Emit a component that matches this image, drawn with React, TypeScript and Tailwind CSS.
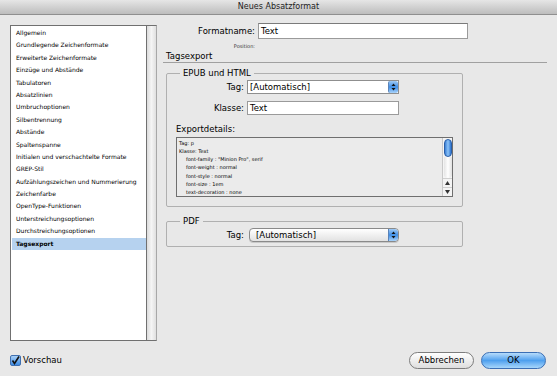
import React from "react";

const items = [
  "Allgemein",
  "Grundlegende Zeichenformate",
  "Erweiterte Zeichenformate",
  "Einzüge und Abstände",
  "Tabulatoren",
  "Absatzlinien",
  "Umbruchoptionen",
  "Silbentrennung",
  "Abstände",
  "Spaltenspanne",
  "Initialen und verschachtelte Formate",
  "GREP-Stil",
  "Aufzählungszeichen und Nummerierung",
  "Zeichenfarbe",
  "OpenType-Funktionen",
  "Unterstreichungsoptionen",
  "Durchstreichungsoptionen",
  "Tagsexport",
];

const details = [
  { text: "Tag: p", indent: false },
  { text: "Klasse: Text", indent: false },
  { text: 'font-family : "Minion Pro", serif', indent: true },
  { text: "font-weight : normal", indent: true },
  { text: "font-style : normal", indent: true },
  { text: "font-size : 1em", indent: true },
  { text: "text-decoration : none", indent: true },
];

const Arrows = () => (
  <svg width="5" height="8" viewBox="0 0 5 8">
    <path d="M2.5 0.5 L4.5 3 L0.5 3 Z" fill="#111" />
    <path d="M2.5 7.5 L4.5 5 L0.5 5 Z" fill="#111" />
  </svg>
);

const Stepper = ({ round }: { round: string }) => (
  <div
    className={`w-[10px] h-full flex items-center justify-center bg-gradient-to-b from-[#9fcaf5] via-[#3d8ee6] to-[#a9d3fa] border-l border-[#5a83b8] ${round}`}
  >
    <Arrows />
  </div>
);

export default function App() {
  return (
    <div
      className="w-[557px] h-[376px] bg-[#e8e8e8] flex flex-col text-black overflow-hidden"
      style={{ fontFamily: '"DejaVu Sans", sans-serif' }}
    >
      {/* title bar */}
      <div className="h-[15px] shrink-0 flex items-center justify-center bg-gradient-to-b from-[#e6e6e6] to-[#bdbdbd] border-b border-[#8f8f8f] text-[8px] text-[#222]">
        Neues Absatzformat
      </div>

      <div className="flex pl-[10px] pt-[8px]">
        {/* category list */}
        <div className="mt-[2px] w-[147px] h-[316px] flex border border-[#707070] border-r-[#a8a8a8]">
          <div className="flex-1 bg-white pt-[1px] pl-[1px] border-r border-[#707070]">
            {items.map((item) => (
              <div
                key={item}
                className={`h-[12.4px] leading-[12.4px] pl-[4px] text-[6px] whitespace-nowrap ${
                  item === "Tagsexport" ? "bg-[#b6d2ef] font-bold" : ""
                }`}
              >
                {item}
              </div>
            ))}
          </div>
          <div className="w-[9px] bg-gradient-to-r from-[#dcdcdc] via-[#f5f5f5] to-[#e0e0e0]" />
        </div>

        {/* right panel */}
        <div className="ml-[6px] w-[384px]">
          <div className="flex items-center h-[16px]">
            <div className="w-[95px] text-right text-[8.5px] pr-[3px]">Formatname:</div>
            <div className="w-[210px] h-[16px] bg-white border border-[#9a9a9a] border-t-[#7a7a7a] text-[8.5px] leading-[14px] pl-[2px]">
              Text
            </div>
          </div>
          <div className="w-[92px] text-right text-[5px] leading-[6px] mt-[4px] text-[#333]">Position:</div>
          <div className="mt-[2px] h-[12px] border-b border-[#a0a0a0] text-[8.5px] leading-[11px] pl-[3px]">
            Tagsexport
          </div>

          {/* EPUB */}
          <fieldset className="mt-[5px] ml-[3px] w-[297px] border border-[#b0b0b0] rounded-[2px] pl-[9px] pb-[9px]">
            <legend className="ml-[4px] px-[3px] text-[8.5px] leading-[11px]">EPUB und HTML</legend>
            <div className="flex items-center h-[14px] mt-[1px]">
              <div className="w-[71px] text-right text-[8.5px] pr-[3px]">Tag:</div>
              <div className="w-[152px] h-[14px] flex bg-white border border-[#8f8f8f]">
                <div className="flex-1 text-[8.5px] leading-[12px] pl-[2px]">[Automatisch]</div>
                <Stepper round="rounded-[2px]" />
              </div>
            </div>
            <div className="flex items-center h-[14px] mt-[7px]">
              <div className="w-[71px] text-right text-[8.5px] pr-[3px]">Klasse:</div>
              <div className="w-[152px] h-[14px] bg-white border border-[#9a9a9a] text-[8.5px] leading-[12px] pl-[2px]">
                Text
              </div>
            </div>
            <div className="mt-[9px] text-[8.5px] leading-[10px]">Exportdetails:</div>
            <div className="mt-[3px] w-[277px] h-[60px] flex border border-[#6f6f6f] bg-[#ebebeb] overflow-hidden">
              <div className="flex-1 pt-[0.5px] pl-[2px] overflow-hidden">
                {details.map((d) => (
                  <div
                    key={d.text}
                    className={`text-[5px] leading-[8.3px] whitespace-nowrap ${d.indent ? "pl-[7px]" : ""}`}
                  >
                    {d.text}
                  </div>
                ))}
              </div>
              <div className="w-[10px] flex flex-col bg-[#f4f4f4] border-l border-[#c8c8c8]">
                <div className="mx-auto mt-[1px] w-[8px] h-[18px] rounded-full bg-gradient-to-r from-[#3a7fd6] via-[#8cc3f7] to-[#2c74d0] border border-[#2a5fa8]" />
                <div className="flex-1 mx-auto w-[8px] rounded-b-full bg-gradient-to-r from-[#e4e4e4] via-[#ffffff] to-[#e0e0e0]" />
                <div className="h-[9px] flex items-center justify-center border-t border-[#cfcfcf]">
                  <svg width="5" height="4" viewBox="0 0 5 4">
                    <path d="M2.5 0 L5 4 L0 4 Z" fill="#333" />
                  </svg>
                </div>
                <div className="h-[9px] flex items-center justify-center border-t border-[#cfcfcf]">
                  <svg width="5" height="4" viewBox="0 0 5 4">
                    <path d="M2.5 4 L5 0 L0 0 Z" fill="#333" />
                  </svg>
                </div>
              </div>
            </div>
          </fieldset>

          {/* PDF */}
          <fieldset className="mt-[9px] ml-[3px] w-[297px] border border-[#b0b0b0] rounded-[2px] pl-[9px] pb-[4px]">
            <legend className="ml-[4px] px-[3px] text-[8.5px] leading-[11px]">PDF</legend>
            <div className="flex items-center h-[14px] mt-[1px]">
              <div className="w-[73px] text-right text-[8.5px] pr-[5px]">Tag:</div>
              <div className="w-[150px] h-[14px] flex rounded-[4px] border border-[#8a8a8a] bg-gradient-to-b from-white to-[#e2e2e2] overflow-hidden shadow-[0_1px_0_#c8c8c8]">
                <div className="flex-1 text-[8.5px] leading-[12px] pl-[6px]">[Automatisch]</div>
                <Stepper round="rounded-r-[3px]" />
              </div>
            </div>
          </fieldset>
        </div>
      </div>

      {/* bottom */}
      <div className="mt-[11px] h-[17px] flex items-center justify-between pl-[10px] pr-[11px]">
        <div className="flex items-center gap-[2px]">
          <div className="w-[11px] h-[11px] rounded-[2px] border border-[#3f6fb0] bg-gradient-to-b from-[#a8d0f7] to-[#3c8be3] flex items-center justify-center">
            <svg width="9" height="9" viewBox="0 0 9 9">
              <path d="M1.5 4.5 L3.5 7.5 L8 0.5" stroke="#111" strokeWidth="1.6" fill="none" />
            </svg>
          </div>
          <span className="text-[8.5px]">Vorschau</span>
        </div>
        <div className="flex gap-[7px]">
          <div className="w-[65px] h-[17px] rounded-full border border-[#7d7d7d] bg-gradient-to-b from-white to-[#dedede] flex items-center justify-center text-[8.5px]">
            Abbrechen
          </div>
          <div className="w-[65px] h-[17px] rounded-full border border-[#3b6fb5] bg-gradient-to-b from-[#b7dcfb] via-[#4ea0ee] to-[#a6d6fb] flex items-center justify-center text-[8.5px]">
            OK
          </div>
        </div>
      </div>
    </div>
  );
}
